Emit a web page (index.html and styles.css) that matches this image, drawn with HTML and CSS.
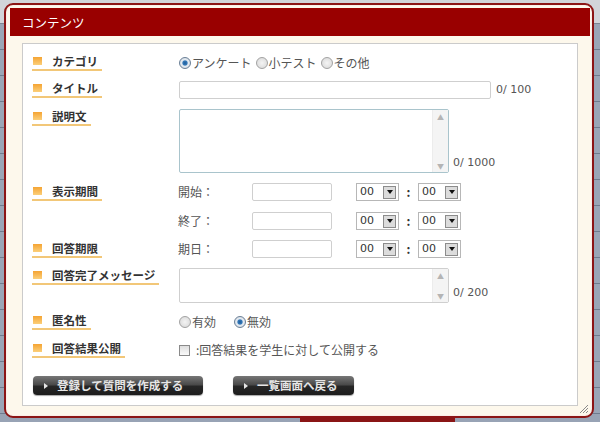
FILE: index.html
```html
<!DOCTYPE html>
<html lang="ja">
<head>
    <meta charset="UTF-8">
    <title>コンテンツ</title>
    <link rel="stylesheet" href="styles.css">
</head>
<body>
<div class="page-bg">
    <div class="bg-head"></div>
    <div class="bg-list"></div>
    <div class="bg-foot"><span class="bg-tab"></span></div>
</div>

<div class="dialog">
    <div class="dialog-title">コンテンツ</div>
    <div class="dialog-body">
        <div class="form">
            <!-- カテゴリ -->
            <div class="row">
                <div class="label"><span>カテゴリ</span></div>
                <div class="value radios">
                    <span class="radio checked">アンケート</span>
                    <span class="radio">小テスト</span>
                    <span class="radio">その他</span>
                </div>
            </div>
            <!-- タイトル -->
            <div class="row">
                <div class="label"><span>タイトル</span></div>
                <div class="value inline">
                    <div class="box title-box"></div>
                    <span class="count">0/ 100</span>
                </div>
            </div>
            <!-- 説明文 -->
            <div class="row">
                <div class="label"><span>説明文</span></div>
                <div class="value inline">
                    <div class="textarea tall focus">
                        <div class="scroll"><i>▲</i><i>▼</i></div>
                    </div>
                    <span class="count bottom">0/ 1000</span>
                </div>
            </div>
            <!-- 表示期間 -->
            <div class="row">
                <div class="label pad1"><span>表示期間</span></div>
                <div class="value period">
                    <div class="time-row">
                        <span class="cap">開始：</span>
                        <div class="box date-box"></div>
                        <div class="select">00<b></b></div>
                        <span class="colon">:</span>
                        <div class="select sel2">00<b></b></div>
                    </div>
                    <div class="time-row">
                        <span class="cap">終了：</span>
                        <div class="box date-box"></div>
                        <div class="select">00<b></b></div>
                        <span class="colon">:</span>
                        <div class="select sel2">00<b></b></div>
                    </div>
                </div>
            </div>
            <!-- 回答期限 -->
            <div class="row">
                <div class="label pad1"><span>回答期限</span></div>
                <div class="value period">
                    <div class="time-row">
                        <span class="cap">期日：</span>
                        <div class="box date-box"></div>
                        <div class="select">00<b></b></div>
                        <span class="colon">:</span>
                        <div class="select sel2">00<b></b></div>
                    </div>
                </div>
            </div>
            <!-- 回答完了メッセージ -->
            <div class="row">
                <div class="label"><span>回答完了メッセージ</span></div>
                <div class="value inline">
                    <div class="textarea short">
                        <div class="scroll"><i>▲</i><i>▼</i></div>
                    </div>
                    <span class="count bottom">0/ 200</span>
                </div>
            </div>
            <!-- 匿名性 -->
            <div class="row">
                <div class="label"><span>匿名性</span></div>
                <div class="value radios anon">
                    <span class="radio">有効</span>
                    <span class="radio checked">無効</span>
                </div>
            </div>
            <!-- 回答結果公開 -->
            <div class="row">
                <div class="label"><span>回答結果公開</span></div>
                <div class="value inline check-row">
                    <span class="check"></span>
                    <span>:回答結果を学生に対して公開する</span>
                </div>
            </div>

            <div class="buttons">
                <div class="btn btn-wide">登録して質問を作成する</div>
                <div class="btn">一覧画面へ戻る</div>
            </div>
        </div>
    </div>
    <svg class="grip" width="10" height="10" viewBox="0 0 10 10">
        <path d="M9 1 L1 9 M9 4 L4 9 M9 7 L7 9" stroke="#8a8a8a" stroke-width="1"/>
    </svg>
</div>
</body>
</html>
```

FILE: styles.css
```css
* {
    margin: 0;
    padding: 0;
    box-sizing: border-box;
}
body {
    width: 600px;
    height: 422px;
    overflow: hidden;
    position: relative;
    font-family: "Noto Sans CJK JP", sans-serif;
    font-size: 12px;
    color: #555;
}

/* 背景のページ */
.page-bg {
    height: 422px;
    display: flex;
    flex-direction: column;
    background: #9aa5b6;
}
.bg-head {
    height: 24px;
    background: #d2d5da;
    border-bottom: 1px solid #7c8594;
}
.bg-list {
    flex: 1;
    background: repeating-linear-gradient(#9aa5b6 0, #9aa5b6 25px, #6f7b8e 25px, #6f7b8e 26px);
}
.bg-foot {
    height: 8px;
    padding-left: 300px;
    background: #98a3b5;
}
.bg-tab {
    display: block;
    width: 155px;
    height: 8px;
    background: #8a1515;
}

/* ダイアログ */
.dialog {
    position: absolute;
    left: 4px;
    top: 3px;
    width: 590px;
    height: 415px;
    border: 2px solid #8c1515;
    border-radius: 9px;
    background: #fdf8ec;
    padding: 3px 2px 0 4px;
    box-shadow: inset 0 0 0 1px #fbeee8;
}
.dialog-title {
    height: 28px;
    background: #990000;
    color: #fff;
    font-size: 12.5px;
    line-height: 29px;
    padding-left: 12px;
}
.dialog-body {
    margin: 7px 12px 0 12px;
    height: 363px;
    border: 1px solid #cbcbcb;
    background: #fff;
    padding: 10px 0 0 9px;
}
.grip {
    position: absolute;
    right: 3px;
    bottom: 2px;
}

.form {
    display: flex;
    flex-direction: column;
    gap: 10px;
}
.row {
    display: flex;
    align-items: flex-start;
}
.label {
    width: 147px;
    flex: none;
    display: flex;
    align-items: flex-start;
}
.label.pad1 {
    padding-top: 1px;
}
.label span {
    display: flex;
    align-items: center;
    font-weight: bold;
    font-size: 11.5px;
    line-height: 14px;
    color: #333;
    border-bottom: 2px solid #f2c778;
    padding: 0 4px 1px 1px;
}
.label span::before {
    content: "";
    width: 9px;
    height: 8px;
    margin-right: 10px;
    background: linear-gradient(#f5a433, #fbcf7a);
}

.value {
    color: #555;
    line-height: 16px;
}
.inline {
    display: flex;
    align-items: center;
}

/* ラジオ */
.radios {
    display: flex;
    align-items: center;
    height: 17px;
    gap: 4px;
}
.radio {
    display: flex;
    align-items: center;
}
.radio::before {
    content: "";
    width: 10px;
    height: 10px;
    margin-right: 1px;
    border-radius: 50%;
    border: 1px solid #a2a2a2;
    background: radial-gradient(circle, #f4f4f4 0, #d6d6d6 100%);
}
.radio.checked::before {
    border-color: #6a7f96;
    background: radial-gradient(circle, #1f5d9a 0, #3478b8 30%, #e6ecf2 45%, #c9d2dc 100%);
}
.anon {
    gap: 18px;
    height: 18px;
}

/* 入力欄 */
.box {
    height: 18px;
    border: 1px solid #cfcfcf;
    border-radius: 2px;
    background: #fff;
}
.title-box {
    width: 312px;
}
.count {
    margin-left: 5px;
    font-family: "DejaVu Sans", sans-serif;
    font-size: 11px;
    color: #555;
}
.count.bottom {
    align-self: flex-end;
    margin-left: 4px;
    margin-bottom: 2px;
}
.textarea {
    width: 270px;
    border: 1px solid #cfcfcf;
    border-radius: 2px;
    display: flex;
    justify-content: flex-end;
}
.textarea.focus {
    border-color: #a9c4cc;
}
.tall {
    height: 64px;
}
.short {
    height: 35px;
}
.scroll {
    width: 16px;
    background: #f4f4f4;
    border-left: 1px solid #ececec;
    display: flex;
    flex-direction: column;
    justify-content: space-between;
    align-items: center;
    padding: 3px 0 1px;
}
.scroll i {
    font-style: normal;
    font-size: 7px;
    line-height: 9px;
    color: #b4b4b4;
}

/* 期間 */
.period {
    display: flex;
    flex-direction: column;
    gap: 11px;
}
.time-row {
    display: flex;
    align-items: center;
    height: 18px;
}
.cap {
    width: 74px;
    margin-left: -1px;
}
.date-box {
    width: 80px;
}
.select {
    margin-left: 24px;
    width: 43px;
    height: 18px;
    border: 1px solid #b7b7b7;
    display: flex;
    align-items: center;
    justify-content: space-between;
    padding: 0 2px 0 3px;
    font-family: "DejaVu Sans", sans-serif;
    font-size: 11px;
    color: #333;
}
.select b {
    width: 13px;
    height: 13px;
    border: 1px solid #8c8c8c;
    background: #dcdcdc;
    display: flex;
    align-items: center;
    justify-content: center;
}
.select b::after {
    content: "";
    border-left: 3px solid transparent;
    border-right: 3px solid transparent;
    border-top: 4px solid #111;
}
.colon {
    width: 19px;
    text-align: center;
    font-weight: bold;
    color: #333;
}
.select.sel2 {
    margin-left: 0;
}

/* チェック */
.check-row {
    height: 18px;
}
.check {
    width: 11px;
    height: 11px;
    border: 1px solid #8a8a8a;
    background: linear-gradient(#dedede, #fafafa);
    margin-right: 6px;
}

/* ボタン */
.buttons {
    display: flex;
    gap: 30px;
    margin-top: 7px;
    padding-left: 1px;
}
.btn {
    width: 121px;
    height: 19px;
    border-radius: 4px;
    background: linear-gradient(#777 0, #4a4a4a 45%, #262626 55%, #1c1c1c 100%);
    box-shadow: 0 1px 1px rgba(0, 0, 0, 0.35);
    color: #e6e6e6;
    font-weight: bold;
    font-size: 11.5px;
    line-height: 19px;
    display: flex;
    align-items: center;
    padding-left: 11px;
}
.btn::before {
    content: "";
    border-top: 3px solid transparent;
    border-bottom: 3px solid transparent;
    border-left: 4px solid #e6e6e6;
    margin-right: 9px;
}
.btn-wide {
    width: 170px;
}
```
